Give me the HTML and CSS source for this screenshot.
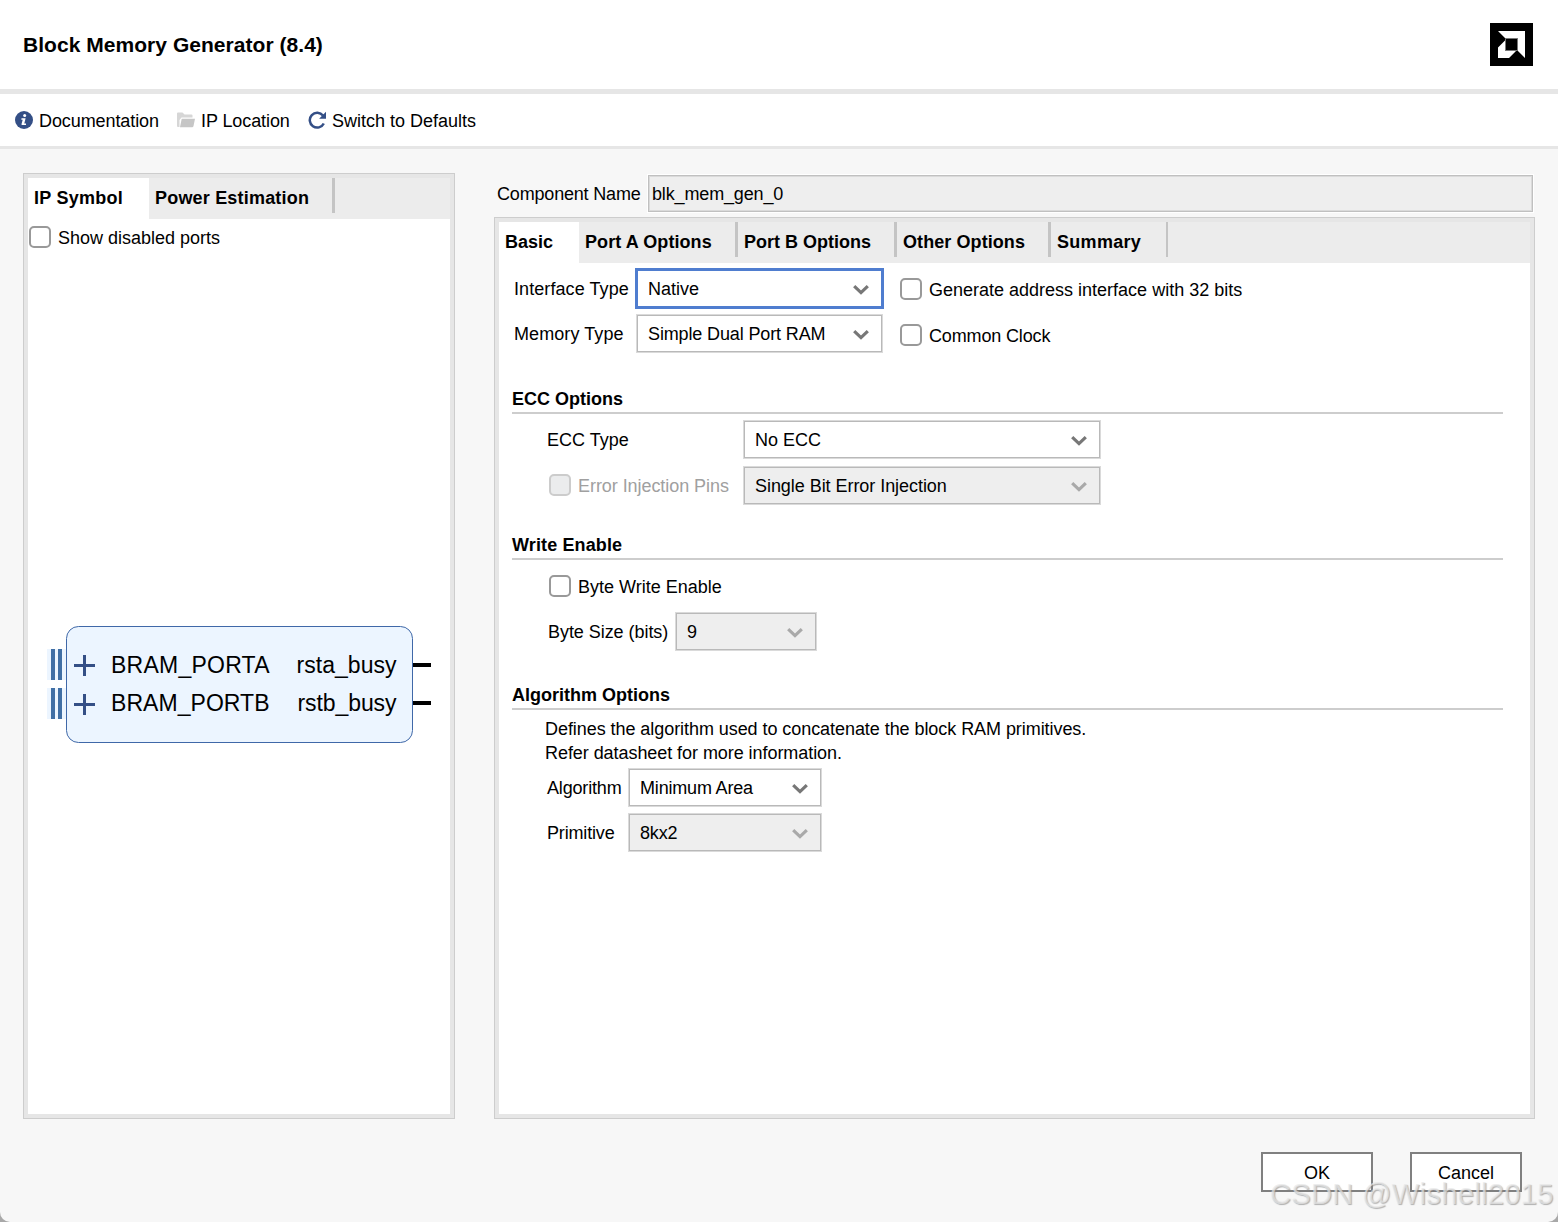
FILE: index.html
```html
<!DOCTYPE html>
<html lang="en">
<head>
  <meta charset="UTF-8" />
  <meta name="viewport" content="width=device-width, initial-scale=1.0"/>
  <title>Block Memory Generator (8.4)</title>
  <link rel="stylesheet" href="styles.css">
</head>
<body>

  <!-- Shared icons -->
  <svg class="sprite" width="0" height="0">
    <symbol id="chevron" viewBox="0 0 16 10">
      <path d="M1.2 1.2 L8 7.6 L14.8 1.2" fill="none" stroke="currentColor" stroke-width="3.2"/>
    </symbol>
  </svg>

  <div class="dialog">
    <header class="header">
      <h1>Block Memory Generator (8.4)</h1>
      <svg class="logo" width="43" height="43" viewBox="0 0 43 43">
        <rect width="43" height="43" fill="#000"/>
        <path d="M8 8H35V35L27.500 27.500V15.500H15.500Z" fill="#fff"/>
        <path d="M15.500 17V27.500H26.500L19 35H8V24.500Z" fill="#fff"/>
        <path d="M15.500 15.500H27.500V27.500H15.500Z" fill="#000" stroke="#777" stroke-width="1"/>
      </svg>
    </header>

    <nav class="toolbar">
      <a class="tool">
        <svg width="18" height="18" viewBox="0 0 18 18">
          <circle cx="9" cy="9" r="9" fill="#344f86"/>
          <circle cx="9.700" cy="4.600" r="1.500" fill="#fff"/>
          <path d="M6.500 7.300H10.600L9.300 12.500H11V14H6.600V12.800L7.700 8.700H6.300Z" fill="#fff"/>
        </svg>
        <span class="t-doc">Documentation</span>
      </a>
      <a class="tool">
        <svg width="18" height="16" viewBox="0 0 18 16">
          <path d="M0 1.500Q0 .5 1 .5H5.500L7.500 2.500H14.500Q15.500 2.500 15.500 3.500V5.500H4.500L2.500 8V15H1Q0 15 0 14Z" fill="#d6d6d6"/>
          <path d="M4.700 6.700H18L16.500 14Q16.300 15.300 15 15.300H3Z" fill="#c6c6c6"/>
        </svg>
        <span class="t-loc">IP Location</span>
      </a>
      <a class="tool">
        <svg width="18" height="18" viewBox="0 0 18 18">
          <path d="M15 4.600A7.400 7.400 0 1 0 15.800 12.500" fill="none" stroke="#344f86" stroke-width="2.500"/>
          <path d="M18 .8V7.700H11.100Z" fill="#344f86"/>
        </svg>
        <span class="t-def">Switch to Defaults</span>
      </a>
    </nav>

    <main class="main">
      <section class="panel symbol-panel">
        <div class="tabs">
          <div class="tab active tab-symbol">IP Symbol</div>
          <div class="tab tab-power">Power Estimation</div>
        </div>
        <div class="symbol-body">
          <label class="check"><i class="box"></i><span>Show disabled ports</span></label>
          <svg class="ip-symbol" width="422" height="120" viewBox="28 625 422 120">
            <g fill="#ecf5ff">
              <rect x="47" y="649" width="19" height="31"/>
              <rect x="47" y="688" width="19" height="31"/>
            </g>
            <g fill="#406fa5">
              <rect x="51" y="649" width="4" height="31"/>
              <rect x="58" y="649" width="4" height="31"/>
              <rect x="51" y="688" width="4" height="31"/>
              <rect x="58" y="688" width="4" height="31"/>
            </g>
            <rect x="66.500" y="626.500" width="346" height="116" rx="12" fill="#ecf5ff" stroke="#3f68a8"/>
            <path d="M74 665.500H95M84.500 655V676M74 704.500H95M84.500 694V715" stroke="#344f86" stroke-width="3"/>
            <path d="M413 665H431M413 703H431" stroke="#000" stroke-width="4"/>
            <g class="port-name">
              <text x="111" y="673" textLength="158.500">BRAM_PORTA</text>
              <text x="111" y="711" textLength="158.500">BRAM_PORTB</text>
              <text x="296.500" y="673" textLength="100">rsta_busy</text>
              <text x="297.500" y="711" textLength="99">rstb_busy</text>
            </g>
          </svg>
        </div>
      </section>

      <section class="config">
        <div class="component">
          <label>Component Name</label>
          <div class="name-input">blk_mem_gen_0</div>
        </div>

        <div class="panel config-panel">
          <div class="tabs">
            <div class="tab active tab-basic">Basic</div>
            <div class="tab tab-a">Port A Options</div>
            <div class="tab tab-b">Port B Options</div>
            <div class="tab tab-other">Other Options</div>
            <div class="tab tab-summary">Summary</div>
          </div>

          <div class="form">
            <div class="row row-interface">
              <label class="w-type">Interface Type</label>
              <div class="combo focus"><span>Native</span><svg><use href="#chevron"/></svg></div>
              <label class="check"><i class="box"></i><span>Generate address interface with 32 bits</span></label>
            </div>
            <div class="row row-memory">
              <label class="w-type">Memory Type</label>
              <div class="combo c-memory"><span>Simple Dual Port RAM</span><svg><use href="#chevron"/></svg></div>
              <label class="check"><i class="box"></i><span>Common Clock</span></label>
            </div>

            <h2 class="ecc">ECC Options</h2>
            <div class="group">
              <div class="row row-ecc">
                <label class="w-ecc">ECC Type</label>
                <div class="combo c-ecc"><span>No ECC</span><svg><use href="#chevron"/></svg></div>
              </div>
              <div class="row row-pins">
                <label class="check w-ecc disabled"><i class="box"></i><span>Error Injection Pins</span></label>
                <div class="combo c-ecc off"><span>Single Bit Error Injection</span><svg><use href="#chevron"/></svg></div>
              </div>
            </div>

            <h2 class="write">Write Enable</h2>
            <div class="group">
              <div class="row row-byte">
                <label class="check"><i class="box"></i><span>Byte Write Enable</span></label>
              </div>
              <div class="row row-size">
                <label class="w-size">Byte Size (bits)</label>
                <div class="combo c-size off"><span>9</span><svg><use href="#chevron"/></svg></div>
              </div>
            </div>

            <h2 class="algo">Algorithm Options</h2>
            <div class="group">
              <p>Defines the algorithm used to concatenate the block RAM primitives.<br>Refer datasheet for more information.</p>
              <div class="row row-algo">
                <label class="w-algo">Algorithm</label>
                <div class="combo c-algo"><span>Minimum Area</span><svg><use href="#chevron"/></svg></div>
              </div>
              <div class="row row-prim">
                <label class="w-algo">Primitive</label>
                <div class="combo c-algo off"><span>8kx2</span><svg><use href="#chevron"/></svg></div>
              </div>
            </div>
          </div>
        </div>
      </section>
    </main>

    <footer class="footer">
      <button>OK</button>
      <button>Cancel</button>
    </footer>
  </div>

  <div class="watermark">CSDN @Wishell2015</div>

</body>
</html>
```

FILE: styles.css
```css
* {
  box-sizing: border-box;
  margin: 0;
  padding: 0;
}
html, body {
  height: 100%;
  overflow: hidden;
}
body {
  background: #a8a8a8;
  font-family: "Liberation Sans", Arial, sans-serif;
  font-size: 18px;
  line-height: 24px;
  color: #000;
  white-space: nowrap;
}
.sprite {
  position: absolute;
}
.dialog {
  display: flex;
  flex-direction: column;
  height: 100%;
  background: #f7f7f7;
  border-radius: 0 0 10px 10px;
}

/* Header and toolbar */
.header {
  display: flex;
  align-items: center;
  justify-content: space-between;
  height: 94px;
  padding: 0 25px 0 23px;
  background: #fff;
  border-bottom: 5px solid #e6e6e6;
}
h1 {
  font-size: 21px;
  letter-spacing: 0.04px;
}
.toolbar {
  display: flex;
  align-items: center;
  height: 55px;
  padding-left: 15px;
  background: #fff;
  border-bottom: 3px solid #e6e6e6;
}
.tool {
  display: flex;
  align-items: center;
  gap: 6px;
}
.tool span {
  padding-top: 2px;
}
.t-doc { width: 138px; letter-spacing: -0.09px; }
.t-loc { width: 107px; letter-spacing: -0.09px; }

/* Panels and tabs */
.main {
  display: flex;
  gap: 39px;
  height: 970px;
  padding: 24px 23px 0;
}
.panel {
  display: flex;
  flex-direction: column;
  background: #fff;
  border: 1px solid #cdcdcd;
  box-shadow: inset 0 0 0 4px #e6e6e6;
  padding: 4px;
}
.symbol-panel {
  width: 432px;
}
.tabs {
  display: flex;
  height: 41px;
  background: #ececec;
}
.tab {
  height: 35px;
  padding-left: 6px;
  line-height: 40px;
  font-weight: bold;
  border-right: 3px solid #c4c4c4;
}
.tab.active {
  height: 41px;
  background: #fff;
  border-right: 0;
}
.tab-symbol { width: 121px; letter-spacing: 0.25px; }
.tab-power { width: 186px; letter-spacing: 0.19px; }
.tab-basic { width: 80px; }
.tab-a { width: 159px; letter-spacing: 0.08px; }
.tab-b { width: 159px; }
.tab-other { width: 154px; letter-spacing: 0.08px; }
.tab-summary { width: 117px; border-right-width: 2px; letter-spacing: 0.3px; }

/* Check boxes */
.check {
  display: flex;
  align-items: center;
  gap: 7px;
}
.box {
  width: 22px;
  height: 22px;
  margin-bottom: 2px;
  border: 2px solid #999;
  border-radius: 5px;
  background: #fff;
}
.disabled {
  color: #a0a0a0;
  letter-spacing: -0.06px;
}
.disabled .box {
  border-color: #ccc;
  background: #ebeced;
}

/* IP symbol */
.symbol-body {
  padding-top: 7px;
}
.symbol-body .check {
  padding-left: 1px;
}
.ip-symbol {
  display: block;
  margin-top: 375px;
}
.port-name {
  font-size: 23px;
}

/* Configuration */
.config {
  display: flex;
  flex-direction: column;
  width: 1041px;
}
.component {
  display: flex;
  align-items: center;
  height: 44px;
  padding: 0 2px 5px 3px;
}
.component label {
  width: 151px;
  padding-top: 3px;
  letter-spacing: -0.18px;
}
.name-input {
  flex: 1;
  height: 37px;
  margin-top: 1px;
  padding-left: 3px;
  line-height: 36px;
  letter-spacing: -0.15px;
  background: #eee;
  border: 1px solid #c0c0c0;
  box-shadow: 0 0 0 1px #fff, inset 0 0 0 1px #dadada;
}
.config-panel {
  flex: 1;
}
.form {
  padding: 5px 27px 0 13px;
}
.row {
  display: flex;
  align-items: center;
  height: 38px;
}
.combo {
  display: flex;
  align-items: center;
  justify-content: space-between;
  height: 39px;
  margin-top: -1px;
  padding: 1px 13px 0 11px;
  background: #fff;
  border: 1px solid #dadada;
  box-shadow: inset 0 0 0 1px #b9b9b9;
}
.combo svg {
  width: 16px;
  height: 10px;
  margin-top: 2px;
  color: #777;
}
.combo.off {
  background: #eee;
}
.combo.off svg {
  color: #a9a9a9;
}
.combo.focus {
  width: 249px;
  height: 41px;
  margin-top: 0;
  padding: 0 12px 0 10px;
  border: 3px solid #4f7dcf;
  box-shadow: none;
}
.row-interface { height: 41px; padding-left: 2px; }
.row-memory { margin-top: 6px; padding-left: 2px; }
.w-type { width: 121px; letter-spacing: 0.08px; }
.row-interface .check { padding: 2px 0 0 16px; }
.row-memory .check { padding: 3px 0 0 17px; letter-spacing: -0.15px; }
.c-memory { width: 247px; margin-left: 1px; }
.c-memory span { letter-spacing: -0.13px; }

h2 {
  height: 28px;
  font-size: 18px;
  line-height: 26px;
  border-bottom: 2px solid #cdcdcd;
}
.ecc { margin-top: 33px; }
.write { margin-top: 27px; letter-spacing: 0.12px; }
.algo { margin-top: 31px; }
.group {
  padding-left: 33px;
}
.row-ecc { margin-top: 7px; padding-left: 2px; }
.w-ecc { width: 196px; }
.c-ecc { width: 358px; }
.row-pins { margin-top: 8px; padding-left: 4px; }
.row-pins .w-ecc { width: 194px; }
.row-pins .combo span { letter-spacing: -0.05px; }
.row-byte { height: 24px; margin-top: 15px; padding-left: 4px; }
.row-size { margin-top: 14px; padding-left: 3px; }
.w-size { width: 127px; letter-spacing: -0.05px; }
.c-size { width: 142px; }
.group p {
  margin-top: 7px;
  letter-spacing: -0.06px;
}
.row-algo { margin-top: 4px; padding-left: 2px; }
.row-prim { margin-top: 7px; padding-left: 2px; }
.w-algo { width: 81px; letter-spacing: -0.17px; }
.c-algo { width: 194px; letter-spacing: -0.18px; }

/* Footer */
.footer {
  display: flex;
  justify-content: flex-end;
  gap: 37px;
  padding: 33px 36px 0 0;
}
button {
  width: 112px;
  height: 40px;
  padding-top: 2px;
  background: #fff;
  border: 2px solid #808080;
  font: inherit;
}
.watermark {
  position: absolute;
  left: 1270px;
  top: 1176px;
  font-size: 29px;
  line-height: 36px;
  letter-spacing: 0.36px;
  color: rgba(232, 232, 232, 0.7);
  text-shadow: 1px 1px 1px rgba(130, 130, 130, 0.6);
}
```
